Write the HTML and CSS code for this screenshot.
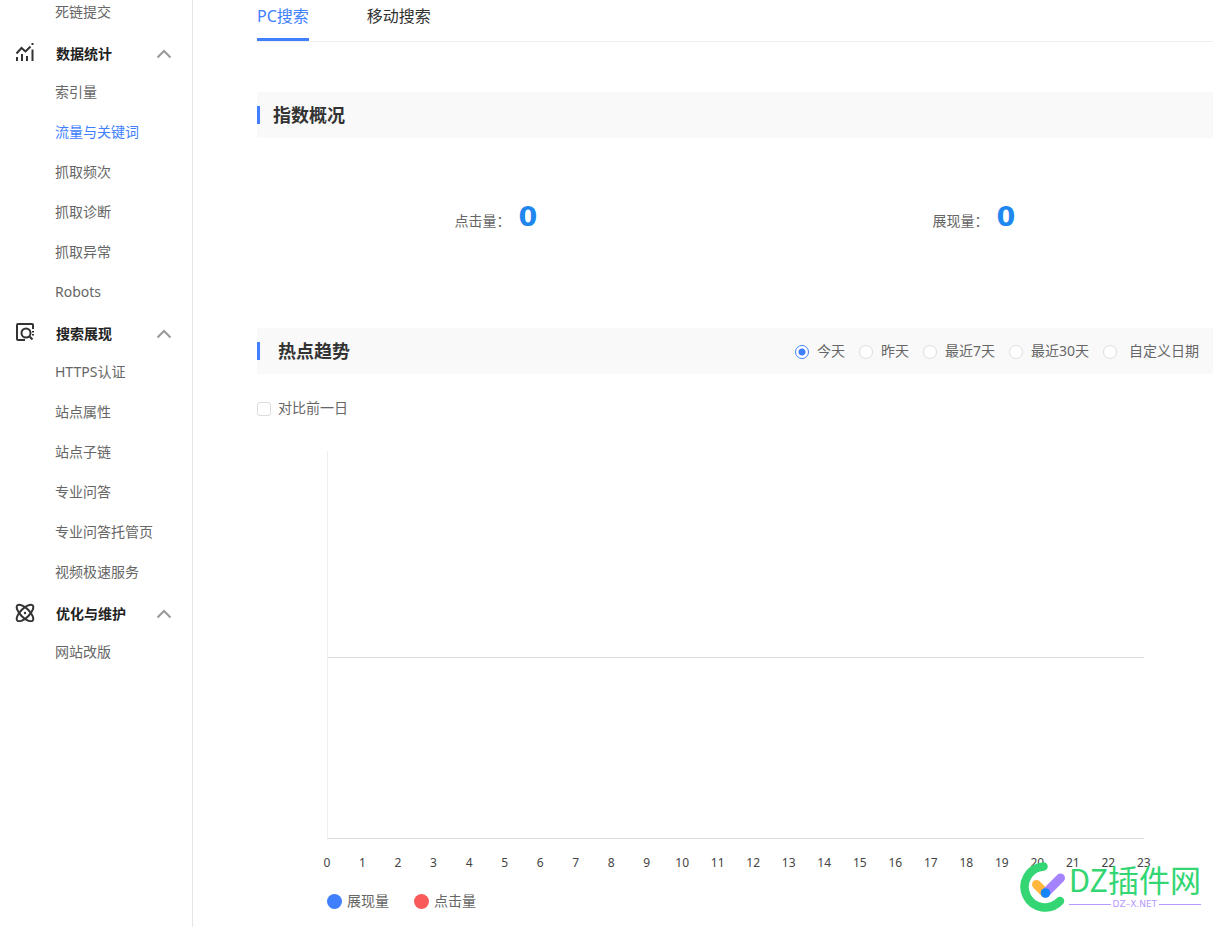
FILE: index.html
```html
<!DOCTYPE html>
<html lang="zh-CN">
<head>
<meta charset="utf-8">
<title>流量与关键词</title>
<link rel="stylesheet" href="styles.css">
</head>
<body>
<div class="layout">
  <nav class="sidebar">
    <a class="item" href="#">死链提交</a>
    <button class="group" type="button">
      <svg class="group-icon" viewBox="0 0 20 20"><path d="M2 19v-4M7 19v-7M12 19v-5M17.500 19V7.500M1.500 11.500l5-5.500 4 3.500 5-5"/><path d="M16.500 2h2" /></svg>
      <span>数据统计</span>
      <svg class="chevron" viewBox="0 0 16 10"><path d="M1.500 8.500L8 2l6.500 6.500"/></svg>
    </button>
    <a class="item" href="#">索引量</a>
    <a class="item active" href="#">流量与关键词</a>
    <a class="item" href="#">抓取频次</a>
    <a class="item" href="#">抓取诊断</a>
    <a class="item" href="#">抓取异常</a>
    <a class="item" href="#">Robots</a>
    <button class="group" type="button">
      <svg class="group-icon" viewBox="0 0 20 20"><path d="M10 18H3a1 1 0 0 1-1-1V3a1 1 0 0 1 1-1h14a1 1 0 0 1 1 1v4"/><circle cx="11" cy="11" r="4.500"/><path d="M14 14l3.500 3.500M18 9v1.500M18 12v1.500"/></svg>
      <span>搜索展现</span>
      <svg class="chevron" viewBox="0 0 16 10"><path d="M1.500 8.500L8 2l6.500 6.500"/></svg>
    </button>
    <a class="item" href="#">HTTPS认证</a>
    <a class="item" href="#">站点属性</a>
    <a class="item" href="#">站点子链</a>
    <a class="item" href="#">专业问答</a>
    <a class="item" href="#">专业问答托管页</a>
    <a class="item" href="#">视频极速服务</a>
    <button class="group" type="button">
      <svg class="group-icon" viewBox="0 0 20 20"><ellipse cx="10" cy="11" rx="10.800" ry="4.500" transform="rotate(45 10 11)"/><ellipse cx="10" cy="11" rx="10.800" ry="4.500" transform="rotate(-45 10 11)"/><circle class="dot" cx="10" cy="11" r="1.200"/></svg>
      <span>优化与维护</span>
      <svg class="chevron" viewBox="0 0 16 10"><path d="M1.500 8.500L8 2l6.500 6.500"/></svg>
    </button>
    <a class="item" href="#">网站改版</a>
  </nav>

  <main class="main">
    <div class="tabs">
      <a class="tab tab-on" href="#">PC搜索</a>
      <a class="tab" href="#">移动搜索</a>
    </div>

    <section>
      <header class="bar"><h2>指数概况</h2></header>
      <div class="stats">
        <div class="stat"><span>点击量：</span><strong>0</strong></div>
        <div class="stat"><span>展现量：</span><strong>0</strong></div>
      </div>
    </section>

    <section>
      <header class="bar bar-trend">
        <h2>热点趋势</h2>
        <div class="ranges">
          <label class="choice"><input type="radio" name="range" checked>今天</label>
          <label class="choice"><input type="radio" name="range">昨天</label>
          <label class="choice"><input type="radio" name="range">最近7天</label>
          <label class="choice"><input type="radio" name="range">最近30天</label>
          <label class="choice choice-custom"><input type="radio" name="range">自定义日期</label>
        </div>
      </header>
      <label class="choice compare"><input type="checkbox">对比前一日</label>
      <div class="chart">
        <div class="plot"><div class="half"></div></div>
        <div class="axis">
          <span>0</span><span>1</span><span>2</span><span>3</span><span>4</span><span>5</span><span>6</span><span>7</span><span>8</span><span>9</span><span>10</span><span>11</span><span>12</span><span>13</span><span>14</span><span>15</span><span>16</span><span>17</span><span>18</span><span>19</span><span>20</span><span>21</span><span>22</span><span>23</span>
        </div>
        <div class="legend">
          <span class="key shows">展现量</span>
          <span class="key clicks">点击量</span>
        </div>
      </div>
    </section>
  </main>
</div>

<div class="watermark">
  <svg class="mark" viewBox="0 0 48 52">
    <path d="M25.500 5.500A20.500 20.500 0 1 0 42 40" stroke="#33d673" stroke-width="8.500"/>
    <path d="M18.500 23.500L27 32" stroke="#ffb83d" stroke-width="9"/>
    <path d="M27.500 32L42.500 17" stroke="#a583ff" stroke-width="9"/>
    <circle cx="27.500" cy="32" r="4.800" fill="#1686ff"/>
  </svg>
  <div class="brand">
    <span class="brand-name">DZ插件网</span>
    <span class="brand-site">DZ–X.NET</span>
  </div>
</div>
</body>
</html>
```
FILE: styles.css
```css
* { box-sizing: border-box; }

body {
  margin: 0;
  background: #fff;
  color: #666;
  font: 14px/20px "Noto Sans", "Noto Sans CJK SC", sans-serif;
}

a { color: inherit; text-decoration: none; }

.layout {
  display: flex;
  min-height: 100vh;
  overflow: hidden;
}

.sidebar {
  flex: none;
  width: 193px;
  margin-top: -8px;
  border-right: 1px solid #e6e6e6;
}

.item {
  display: block;
  padding-left: 55px;
  line-height: 40px;
}

.active { color: #4080ff; }

.group {
  display: flex;
  align-items: center;
  width: 100%;
  height: 40px;
  padding: 4px 20px 0 15px;
  border: 0;
  background: none;
  color: #222;
  font: inherit;
  font-weight: 700;
}

.group-icon {
  width: 20px;
  height: 20px;
  margin: 0 21px 4px 0;
  fill: none;
  stroke: #333;
  stroke-width: 2;
}

.group-icon .dot { fill: #333; stroke: none; }

.chevron {
  width: 16px;
  height: 10px;
  margin-left: auto;
  fill: none;
  stroke: #999;
  stroke-width: 2;
}

.main {
  flex: 1;
  min-width: 0;
  padding: 0 6px 0 64px;
}

.tabs {
  display: flex;
  gap: 58px;
  margin-bottom: 50px;
  border-bottom: 1px solid #eee;
  color: #333;
  font-size: 16px;
}

.tab {
  padding: 6px 0 12px;
  border-bottom: 3px solid transparent;
}

.tab-on { border-color: #4080ff; color: #4080ff; }

.bar {
  display: flex;
  align-items: center;
  justify-content: space-between;
  height: 46px;
  padding-right: 14px;
  background: #f9f9f9;
}

.bar h2 {
  margin: 0;
  padding-left: 13px;
  border-left: 3px solid #4080ff;
  color: #333;
  font-size: 18px;
  line-height: 18px;
}

.bar-trend h2 { padding-left: 18px; }

.stats {
  display: grid;
  grid-template-columns: 1fr 1fr;
  height: 190px;
  padding-top: 59px;
}

.stat {
  display: flex;
  align-items: baseline;
  justify-content: center;
  gap: 8px;
}

.stat strong {
  color: #1e87f0;
  font-family: "DejaVu Sans", sans-serif;
  font-size: 27px;
  line-height: 40px;
}

.ranges { display: flex; gap: 14px; }

.choice {
  display: flex;
  align-items: center;
  gap: 8px;
}

.choice-custom { gap: 12px; }

.choice input {
  appearance: none;
  flex: none;
  width: 14px;
  height: 14px;
  margin: 1px 0 0;
  border: 1px solid #ddd;
  border-radius: 3px;
  background: #fff;
}

.choice input[type="radio"] { border-radius: 50%; }

.choice input[type="radio"]:checked {
  border-color: #4080ff;
  background: radial-gradient(circle, #4080ff 3px, #fff 4px);
}

.compare {
  gap: 7px;
  margin: 24px 0 33px;
}

.chart { padding: 0 69px 0 70px; }

.plot {
  height: 388px;
  border-bottom: 1px solid #ddd;
  border-left: 1px solid #eee;
}

.half {
  height: 207px;
  border-bottom: 1px solid #ddd;
}

.axis {
  display: flex;
  justify-content: space-between;
  margin-top: 14px;
  color: #444;
  font-size: 12px;
}

.axis span {
  display: flex;
  justify-content: center;
  width: 0;
}

.legend {
  display: flex;
  gap: 25px;
  margin-top: 18px;
}

.key {
  display: flex;
  align-items: center;
  gap: 5px;
}

.key::before {
  width: 15px;
  height: 15px;
  margin-top: 1px;
  border-radius: 50%;
  content: "";
}

.shows::before { background: #4080ff; }
.clicks::before { background: #fa5a5a; }

.watermark {
  position: absolute;
  right: 18px;
  bottom: 14px;
  display: flex;
  gap: 3px;
}

.mark {
  width: 48px;
  height: 52px;
  fill: none;
  stroke-linecap: round;
}

.brand {
  display: flex;
  flex-direction: column;
  color: #33d673;
}

.brand-name {
  font-family: "Noto Sans CJK SC", sans-serif;
  font-size: 31px;
  font-weight: 400;
  line-height: 36px;
}

.brand-site {
  display: flex;
  align-items: center;
  gap: 2px;
  margin-top: 2px;
  color: #b59aff;
  font-family: "DejaVu Sans", sans-serif;
  font-size: 9px;
  line-height: 10px;
}

.brand-site::before,
.brand-site::after {
  flex: 1;
  height: 1px;
  background: #b59aff;
  content: "";
}
```
